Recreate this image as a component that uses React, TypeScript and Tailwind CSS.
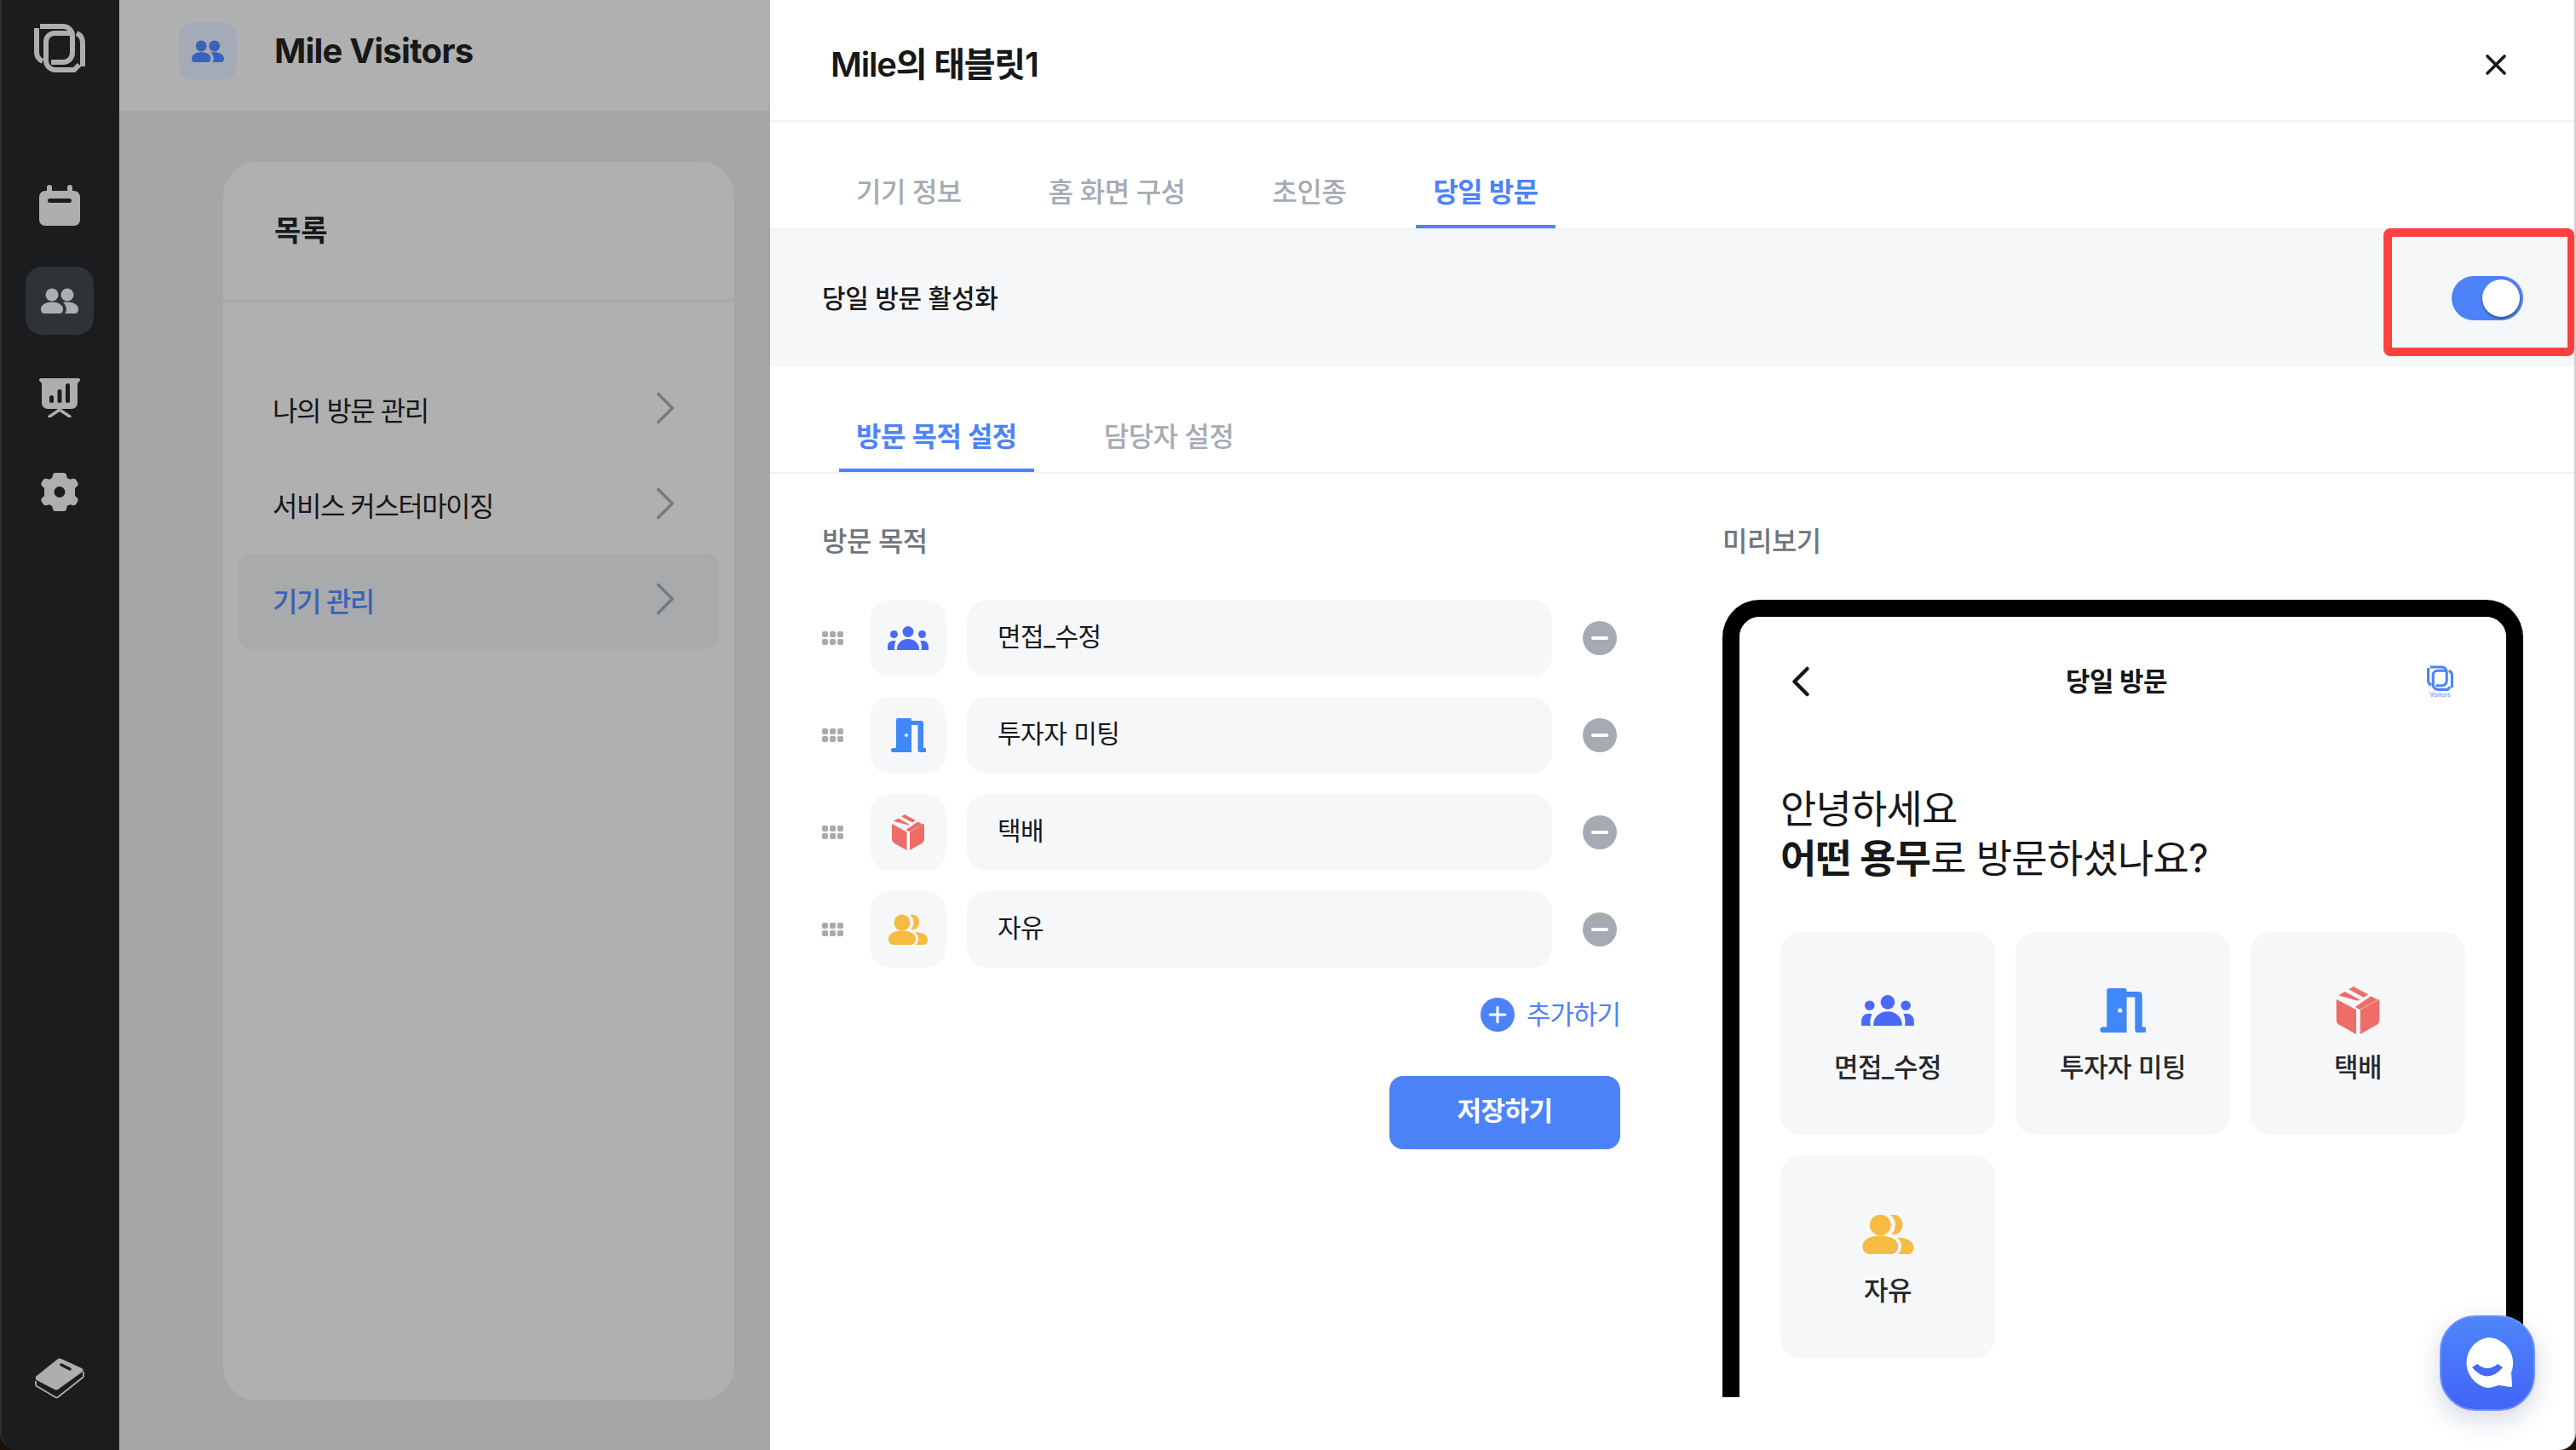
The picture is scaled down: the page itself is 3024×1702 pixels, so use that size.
import type { ReactNode } from 'react';
import { ChevronLeft, ChevronRight, Plus, X } from 'lucide-react';

const cjk = "font-['Inter','Noto_Sans_CJK_KR',sans-serif]";

type IconProps = { className?: string };

function Logo({ className }: IconProps) {
  return (
    <svg viewBox="0 0 60 60" className={className} fill="none" stroke="currentColor" strokeWidth="6">
      <path d="M7 4h27a11 11 0 0 1 11 11v20a11 11 0 0 1-11 11H20" />
      <path d="M14 42V22a10 10 0 0 1 10-10h20" />
      <path d="M14 40v5a11 11 0 0 0 11 10h22l6-6" />
      <path d="M3 6v28a12 12 0 0 0 7 11" />
      <path d="M50 12a12 12 0 0 1 7 11v28" />
    </svg>
  );
}

function Calendar({ className }: IconProps) {
  return (
    <svg viewBox="0 0 48 48" className={className} fill="currentColor">
      <path d="M12 0a3 3 0 0 1 3 3v4h18V3a3 3 0 0 1 6 0v4h2a7 7 0 0 1 7 7v27a7 7 0 0 1-7 7H7a7 7 0 0 1-7-7V14a7 7 0 0 1 7-7h2V3a3 3 0 0 1 3-3z" />
      <rect x="10" y="16" width="28" height="5" rx="2.5" fill="#1a1c1e" />
    </svg>
  );
}

function People({ className }: IconProps) {
  return (
    <svg viewBox="0 0 44 30" className={className} fill="currentColor">
      <circle cx="13" cy="8" r="7.5" />
      <circle cx="31" cy="8" r="7.5" />
      <path d="M0 25c0-5.500 6-8.500 13-8.500S26 19.500 26 25c0 3-1.500 5-4 5H4c-2.500 0-4-2-4-5z" />
      <path d="M28 30c1.300-1.400 1.800-3 1.800-5 0-3-1.300-6-3.800-8 1.500-.4 3.200-.5 5-.5 7 0 13 3 13 8.500 0 3-1.500 5-4 5z" />
    </svg>
  );
}

function Board({ className }: IconProps) {
  return (
    <svg viewBox="0 0 48 46" className={className} fill="currentColor">
      <path d="M2 0h44a2 2 0 0 1 2 2.500L45 6v23a7 7 0 0 1-7 7H10a7 7 0 0 1-7-7V6L0 2.500A2 2 0 0 1 2 0z" />
      <rect x="12" y="20" width="5" height="9" rx="2.500" fill="#1a1c1e" />
      <rect x="21.500" y="13" width="5" height="16" rx="2.500" fill="#1a1c1e" />
      <rect x="31" y="6" width="5" height="23" rx="2.500" fill="#1a1c1e" />
      <path d="M24 37l-12 8M24 37l12 8" stroke="currentColor" strokeWidth="3.500" strokeLinecap="round" />
    </svg>
  );
}

function Gear({ className }: IconProps) {
  return (
    <svg viewBox="0 0 44 47" className={className} fill="currentColor">
      <path fillRule="evenodd" d="M17 1h10a3 3 0 0 1 3 2.500l.8 3.500 3.200 1.800 3.600-1a3.500 3.500 0 0 1 3.900 1.600l1.700 3a3.500 3.500 0 0 1-.5 4L40 19v9l2.700 2.600a3.500 3.500 0 0 1 .5 4l-1.700 3a3.500 3.500 0 0 1-3.900 1.600l-3.600-1-3.200 1.800-.8 3.500A3 3 0 0 1 27 46H17a3 3 0 0 1-3-2.500l-.8-3.500-3.200-1.800-3.600 1a3.500 3.500 0 0 1-3.900-1.600l-1.700-3a3.500 3.500 0 0 1 .5-4L4 28v-9l-2.700-2.600a3.500 3.500 0 0 1-.5-4l1.700-3A3.500 3.500 0 0 1 6.400 7.800l3.600 1L13.200 7l.8-3.500A3 3 0 0 1 17 1zm5 16a6.500 6.500 0 1 0 0 13 6.500 6.500 0 0 0 0-13z" />
    </svg>
  );
}

function Book({ className }: IconProps) {
  return (
    <svg viewBox="0 0 58 49" className={className}>
      <path d="M31 2L55 13a3 3 0 0 1 1 4L27 38a4 4 0 0 1-4 0L2 27a3 3 0 0 1 0-5L27 2a4 4 0 0 1 4 0z" fill="currentColor" />
      <path d="M1 28v4a3 3 0 0 0 1 2l22 13a3 3 0 0 0 3 0l29-23a3 3 0 0 0 1-2v-5" fill="none" stroke="currentColor" strokeWidth="1.800" />
      <path d="M31 9l10 5" stroke="#1a1c1e" strokeWidth="3.500" strokeLinecap="round" />
    </svg>
  );
}

function Group({ className }: IconProps) {
  return (
    <svg viewBox="0 0 48 28" className={className} fill="#4b68f7">
      <circle cx="24" cy="6.500" r="6.500" />
      <circle cx="7.500" cy="9.500" r="4.500" />
      <circle cx="40.500" cy="9.500" r="4.500" />
      <path d="M11 28c-.6-7 5-13 13-13s13.600 6 13 13c0 0 0 0-1 0H12c-1 0-1 0-1 0z" />
      <path d="M0 28v-4c0-4 2.500-7 7-7 1 0 2 .2 2.700.5C8 20 7.700 24 8.300 28H0z" />
      <path d="M48 28v-4c0-4-2.500-7-7-7-1 0-2 .2-2.700.5 1.700 2.500 2 6.500 1.400 10.500H48z" />
    </svg>
  );
}

function Door({ className }: IconProps) {
  return (
    <svg viewBox="0 0 41 40" className={className} fill="#3f88f8">
      <path d="M6 2a2 2 0 0 1 2-2h14a2 2 0 0 1 2 2v1h11a3 3 0 0 1 3 3v29h1.500a2.500 2.500 0 0 1 0 5H34a2.500 2.500 0 0 1-2.500-2.500V8H24v32H2.500a2.500 2.500 0 0 1 0-5H6V2z" />
      <circle cx="18" cy="20" r="2" fill="#f6f7f9" />
    </svg>
  );
}

function Box({ className }: IconProps) {
  return (
    <svg viewBox="0 0 38 42" className={className} fill="#ee6d68">
      <path d="M15 0l13 7-4 2.500L11 2.500z" />
      <path d="M7.500 4.500l13 7-1.500 1L4 8.500 2 7.500z" />
      <path d="M30.500 8.500l6 3.200-15 8-1 .5-4-2.200z" />
      <path d="M0 11l17.500 9.500V42L3 34a6 6 0 0 1-3-5z" />
      <path d="M38 11l-17 9.500V42l14-8a6 6 0 0 0 3-5z" />
    </svg>
  );
}

function Friends({ className }: IconProps) {
  return (
    <svg viewBox="0 0 46 36" className={className} fill="#f5bb42">
      <circle cx="16" cy="10" r="9.500" />
      <path d="M25 1c5.500-2 11 2 11 8.500S31 19.500 26 18c2-2 3.500-5 3.500-8.500S28 3 25 1z" />
      <path d="M0 29c0-6.500 7.500-9.500 16-9.500s16 3 16 9.500c0 4.500-2.500 7-6 7H6c-3.500 0-6-2.500-6-7z" />
      <path d="M32 36c2-1.800 3-4 3-7 0-3.500-1.500-6-4-8 8 .2 15 3 15 9 0 3.500-2 6-5 6z" />
    </svg>
  );
}

function GripDots() {
  return (
    <div className="grid w-[25px] shrink-0 grid-cols-3 gap-[2px]">
      {[0, 1, 2, 3, 4, 5].map((i) => (
        <span key={i} className="h-[7px] w-[7px] rounded-[2px] bg-[#a5abb3]" />
      ))}
    </div>
  );
}

const purposes = [
  { label: '면접_수정', icon: <Group className="h-[28px] w-[48px]" />, cardIcon: <Group className="h-[36px] w-[64px]" /> },
  { label: '투자자 미팅', icon: <Door className="h-[40px] w-[41px]" />, cardIcon: <Door className="h-[52px] w-[54px]" /> },
  { label: '택배', icon: <Box className="h-[42px] w-[38px]" />, cardIcon: <Box className="h-[56px] w-[52px]" /> },
  { label: '자유', icon: <Friends className="h-[36px] w-[46px]" />, cardIcon: <Friends className="h-[47px] w-[61px]" /> },
];

function Sidebar() {
  return (
    <aside className="flex w-[140px] shrink-0 flex-col items-center rounded-bl-[20px] border-l-2 border-[#2e3033] bg-[#1a1c1e] pr-[2px] text-[#adaeb0]">
      <Logo className="mt-[27px] h-[60px] w-[60px]" />
      <Calendar className="mt-[130px] h-[48px] w-[48px]" />
      <div className="mt-[48px] flex h-[80px] w-[80px] items-center justify-center rounded-[20px] bg-[#2f3237]">
        <People className="h-[30px] w-[44px]" />
      </div>
      <Board className="mt-[51px] h-[46px] w-[48px]" />
      <Gear className="mt-[64px] h-[47px] w-[44px]" />
      <Book className="mb-[60px] mt-auto h-[49px] w-[58px]" />
    </aside>
  );
}

function MenuRow({ label, active }: { label: string; active?: boolean }) {
  return (
    <div className={`mx-[18px] flex h-[112px] items-center justify-between rounded-[16px] pl-[40px] pr-[30px] ${active ? 'bg-[#a9aaac]' : ''}`}>
      <span className={`mt-[2px] text-[32px] tracking-[-1.5px] ${active ? 'font-medium text-[#3b62b8]' : 'text-[#161718]'}`}>{label}</span>
      <ChevronRight className="-mt-[6px] h-[66px] w-[66px] text-[#747a80]" strokeWidth={1.300} />
    </div>
  );
}

function LeftPane() {
  return (
    <div className="flex w-[764px] shrink-0 flex-col bg-[#a5a6a8]">
      <header className="flex h-[130px] items-center gap-[44px] bg-[#b0b0b0] pl-[70px]">
        <div className="-mt-[10px] flex h-[68px] w-[68px] items-center justify-center rounded-[16px] bg-[#a5abb6] text-[#3b62b8]">
          <People className="h-[28px] w-[38px]" />
        </div>
        <span className="-mt-[10px] text-[40px] font-bold tracking-[-0.8px] text-[#17181a]">Mile Visitors</span>
      </header>
      <div className="ml-[122px] mt-[60px] h-[1454px] w-[600px] rounded-[40px] bg-[#b0b0b0]">
        <div className="flex h-[165px] items-center border-b-[4px] border-[#a9a9a9] pl-[60px]">
          <span className="text-[34px] font-semibold text-[#17181a]">목록</span>
        </div>
        <div className="pt-[71px]">
          <MenuRow label="나의 방문 관리" />
          <MenuRow label="서비스 커스터마이징" />
          <MenuRow label="기기 관리" active />
        </div>
      </div>
    </div>
  );
}

function TabLink({ label, active }: { label: string; active?: boolean }) {
  return (
    <div className={`flex items-center border-b-[4px] px-[20px] ${active ? 'border-[#4d83f8] font-semibold text-[#4d83f8]' : 'border-transparent font-medium text-[#a5abb3]'}`}>
      {label}
    </div>
  );
}

function PurposeRow({ label, icon }: { label: string; icon: ReactNode }) {
  return (
    <div className="flex h-[90px] items-center">
      <GripDots />
      <div className="ml-[31px] flex h-[90px] w-[90px] shrink-0 items-center justify-center rounded-[24px] bg-[#f6f7f9]">{icon}</div>
      <div className="ml-[24px] flex h-[90px] w-[687px] items-center rounded-[24px] bg-[#f6f7f9] pb-[4px] pl-[36px] text-[30px] tracking-[-0.5px] text-[#17181a]">{label}</div>
      <div className="ml-[36px] flex h-[40px] w-[40px] items-center justify-center rounded-full bg-[#a5abb3]">
        <span className="h-[4px] w-[20px] rounded-full bg-white" />
      </div>
    </div>
  );
}

function PhonePreview() {
  return (
    <div className="mt-[48px] h-[936px] w-[940px] rounded-t-[44px] border-x-[20px] border-t-[20px] border-black">
      <div className="h-full rounded-t-[24px] bg-white px-[48px]">
        <div className="flex h-[152px] items-center justify-between">
          <ChevronLeft className="-ml-[6px] h-[60px] w-[60px] text-[#17181a]" strokeWidth={1.800} />
          <span className="mr-[24px] text-[31px] font-bold tracking-[-0.5px] text-[#17181a]">당일 방문</span>
          <div className="mr-[14px] flex flex-col items-center text-[#4d83f8]">
            <Logo className="h-[31px] w-[31px]" />
            <span className="text-[7px] leading-[8px]">Visitors</span>
          </div>
        </div>
        <h2 className="mt-[44px] text-[46px] font-normal leading-[58px] tracking-[-0.8px] text-[#17181a]">
          안녕하세요
          <br />
          <b className="font-bold">어떤 용무</b>로 방문하셨나요?
        </h2>
        <div className="mt-[58px] grid grid-cols-[252px_252px_252px] gap-[24px]">
          {purposes.map((p) => (
            <div key={p.label} className="flex h-[238px] flex-col items-center rounded-[24px] bg-[#f6f7f9]">
              <div className="mt-[64px] flex h-[56px] items-center justify-center">{p.cardIcon}</div>
              <span className="mt-[16px] text-[31px] font-medium tracking-[-0.5px] text-[#26282b]">{p.label}</span>
            </div>
          ))}
        </div>
      </div>
    </div>
  );
}

function Panel() {
  return (
    <main className="relative flex w-[2120px] shrink-0 flex-col rounded-br-[20px] border-r-[2px] border-[#cfcfcf] bg-white">
      <div className="flex h-[144px] shrink-0 items-center justify-between border-b-[3px] border-[#f5f5f6] pl-[71px] pr-[72px] pt-[10px]">
        <span className="text-[40px] font-semibold tracking-[-1.200px] text-[#17181a]">Mile의 태블릿1</span>
        <X className="h-[40px] w-[40px] text-[#17181a]" strokeWidth={2.200} />
      </div>
      <div className="flex h-[124px] shrink-0 items-stretch gap-[62px] pl-[81px] pt-[44px] text-[32px] tracking-[-0.5px]">
        <TabLink label="기기 정보" />
        <TabLink label="홈 화면 구성" />
        <TabLink label="초인종" />
        <TabLink label="당일 방문" active />
      </div>
      <div className="flex h-[162px] shrink-0 items-center justify-between border-t-[2px] border-[#f0f1f3] bg-[#f6f7f9] pl-[61px] pr-[60px]">
        <span className="text-[30px] font-medium tracking-[-0.3px] text-[#17181a]">당일 방문 활성화</span>
        <div className="flex h-[52px] w-[84px] items-center justify-end rounded-full bg-[#4d83f8] pr-[4px]">
          <span className="h-[44px] w-[44px] rounded-full bg-white shadow-[0_2px_3px_rgba(30,40,80,0.6)]" />
        </div>
      </div>
      {/* annotation box over the toggle */}
      <div className="absolute left-[1894px] top-[268px] h-[150px] w-[224px] rounded-[8px] border-y-[10px] border-l-[10px] border-r-[8px] border-[#ff4040]" />
      <div className="flex h-[126px] shrink-0 items-stretch gap-[62px] border-b-[2px] border-[#f0f1f3] pl-[81px] pt-[46px] text-[32px] tracking-[-0.5px]">
        <TabLink label="방문 목적 설정" active />
        <TabLink label="담당자 설정" />
      </div>
      <div className="flex min-h-0 flex-1 pl-[61px]">
        <section className="w-[1057px] shrink-0 pt-[60px]">
          <div className="text-[32px] font-medium leading-[40px] tracking-[-0.5px] text-[#70757c]">방문 목적</div>
          <div className="mt-[48px] flex flex-col gap-[24px]">
            {purposes.map((p) => (
              <PurposeRow key={p.label} label={p.label} icon={p.icon} />
            ))}
          </div>
          <div className="mr-[120px] mt-[32px] flex items-center justify-end gap-[14px] text-[31px] tracking-[-1px] text-[#4d83f8]">
            <span className="flex h-[40px] w-[40px] items-center justify-center rounded-full bg-[#4d83f8]">
              <Plus className="h-[30px] w-[30px] text-white" strokeWidth={2.500} />
            </span>
            추가하기
          </div>
          <div className="mr-[120px] mt-[48px] flex justify-end">
            <button className="h-[86px] w-[271px] rounded-[16px] bg-[#4d83f8] pb-[2px] text-[31px] font-semibold tracking-[-0.5px] text-white">저장하기</button>
          </div>
        </section>
        <section className="w-[940px] shrink-0 pt-[60px]">
          <div className="text-[32px] font-medium leading-[40px] tracking-[-0.5px] text-[#70757c]">미리보기</div>
          <PhonePreview />
        </section>
      </div>
      <div className="absolute left-[1960px] top-[1544px] flex h-[112px] w-[112px] items-center justify-center rounded-[42px] border-[2px] border-[#6b90fa] bg-gradient-to-b from-[#4f85fb] to-[#4264f7] shadow-[0_10px_30px_rgba(40,60,120,0.2)]">
        <svg viewBox="0 0 60 60" className="h-[60px] w-[60px]">
          <path d="M30 0a30 30 0 0 1 28 41l1 15c0 2-1 2-2 2l-14-2c-4 1-8 3-13 3a30 30 0 0 1 0-59z" fill="#fff" />
          <path d="M12 35l6-4q12 10 24 0l6 4q-18 21-36 0z" fill="#4668f6" />
        </svg>
      </div>
    </main>
  );
}

export default function App() {
  return (
    <div className={`flex h-[1702px] w-[3024px] overflow-hidden bg-[#1a1008] ${cjk}`}>
      <Sidebar />
      <LeftPane />
      <Panel />
    </div>
  );
}
